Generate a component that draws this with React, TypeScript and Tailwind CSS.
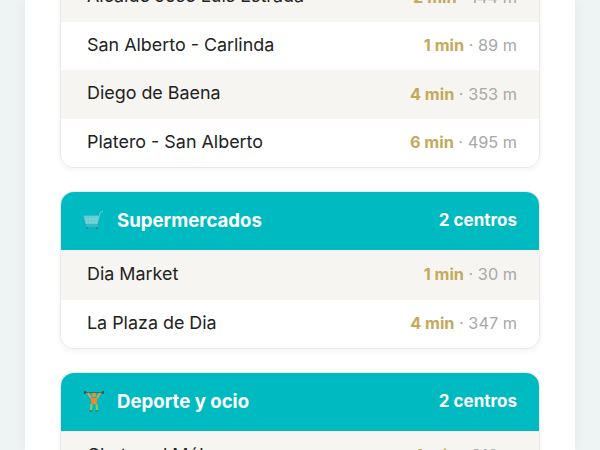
import React from 'react';

const CartIcon = () => (
	<svg width="22" height="20" viewBox="0 0 22 20" fill="none">
		<path d="M1 6h14.500l-1.500 8H3L1 6Z" fill="#5cc9d2" stroke="#6cc6d0" strokeWidth="0.8" />
		<path d="M4 6v8M7 6v8M10 6v8M13 6v8M2 9h13M2.500 12h12" stroke="#8ddbe0" strokeWidth="0.6" />
		<path d="M14 14l3-11 3-2" stroke="#86c4cc" strokeWidth="1" />
		<path d="M3 16h12" stroke="#6fb8c2" strokeWidth="1" />
		<circle cx="4" cy="18" r="1.2" fill="#3f8090" />
		<circle cx="14" cy="18" r="1.2" fill="#3f8090" />
	</svg>
);

const LifterIcon = () => (
	<svg width="22" height="22" viewBox="0 0 22 22" fill="none">
		<path d="M1 2.500h20" stroke="#5b5b4f" strokeWidth="1" />
		<path d="M2 1v3M20 1v3" stroke="#4a4a40" strokeWidth="1.600" />
		<path d="M5 3l3 5M17 3l-3 5" stroke="#d9a441" strokeWidth="2" />
		<circle cx="11" cy="5" r="2.200" fill="#d9983a" />
		<path d="M7.500 8h7l-1 6h-5l-1-6Z" fill="#ef8a2c" />
		<path d="M8.500 14l-.5 6M13.500 14l.5 6" stroke="#9bbf55" strokeWidth="2.200" />
		<path d="M6.500 21h3M12.500 21h3" stroke="#4f6a55" strokeWidth="1.200" />
	</svg>
);

type Place = { name: string; min: number; dist: number };

const Row: React.FC<Place & { shaded: boolean; height: string }> = ({ name, min, dist, shaded, height }) => (
	<div className={`flex items-center justify-between pl-[26px] pr-[22px] ${height} ${shaded ? 'bg-[#f7f5f1]' : 'bg-white'}`}>
		<span className="-mt-[1px] text-[17.9px] text-[#222222]">{name}</span>
		<span className="-mt-[1px] text-[16.3px] text-[#a8a8a8]">
			<span className="font-bold text-[#c4a95c]">{min} min</span> · {dist} m
		</span>
	</div>
);

const Section: React.FC<{ icon?: React.ReactNode; title?: string; count?: string; places: Place[] }> = ({
	icon,
	title,
	count,
	places,
}) => (
	<div className="overflow-hidden rounded-[14px] border border-[#e9e9e9] bg-white shadow-[0_2px_6px_rgba(0,0,0,0.05)]">
		{title && (
			<div className="-mx-px -mt-px flex h-[59px] items-center justify-between bg-[#00bac2] px-[23px] text-white">
				<div className="flex items-center gap-[12px]">
					<span className="flex w-[22px] justify-center">{icon}</span>
					<span className="text-[18.6px] font-bold">{title}</span>
				</div>
				<span className="text-[17px] font-bold">{count}</span>
			</div>
		)}
		{places.map((p, i) => (
			<Row
				key={p.name}
				{...p}
				shaded={i % 2 === 0}
				height={title ? (i === 0 ? 'h-[50px]' : 'h-[48px]') : 'h-[48.5px]'}
			/>
		))}
	</div>
);

export default function App() {
	return (
		<div className="h-[450px] overflow-hidden bg-[#eef3f4] px-[25px] font-['Inter',sans-serif]">
			<div className="h-full overflow-hidden bg-white px-[35px] shadow-[0_0_14px_rgba(0,0,0,0.05)]">
				<div className="-mt-[28px] flex flex-col gap-[23px]">
					<Section
						places={[
							{ name: 'Alcalde José Luis Estrada', min: 2, dist: 144 },
							{ name: 'San Alberto - Carlinda', min: 1, dist: 89 },
							{ name: 'Diego de Baena', min: 4, dist: 353 },
							{ name: 'Platero - San Alberto', min: 6, dist: 495 },
						]}
					/>
					<Section
						icon={<CartIcon />}
						title="Supermercados"
						count="2 centros"
						places={[
							{ name: 'Dia Market', min: 1, dist: 30 },
							{ name: 'La Plaza de Dia', min: 4, dist: 347 },
						]}
					/>
					<Section
						icon={<LifterIcon />}
						title="Deporte y ocio"
						count="2 centros"
						places={[
							{ name: 'Chateo el Mól', min: 4, dist: 310 },
							{ name: 'Gimnasio Centro', min: 5, dist: 402 },
						]}
					/>
				</div>
			</div>
		</div>
	);
}
